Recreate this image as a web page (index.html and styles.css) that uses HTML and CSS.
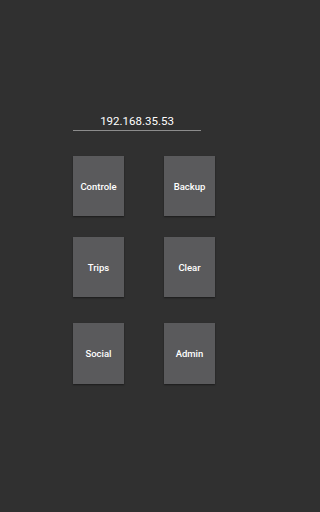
FILE: index.html
```html
<!DOCTYPE html>
<html>
<head>
<meta charset="utf-8">
<link rel="stylesheet" href="styles.css">
</head>
<body>
<div class="screen">
  <div class="ip-field">
    <div class="ip-text">192.168.35.53</div>
    <div class="ip-line"></div>
  </div>
  <div class="grid">
    <div class="row row1">
      <div class="btn">Controle</div>
      <div class="btn">Backup</div>
    </div>
    <div class="row row2">
      <div class="btn">Trips</div>
      <div class="btn">Clear</div>
    </div>
    <div class="row row3">
      <div class="btn">Social</div>
      <div class="btn">Admin</div>
    </div>
  </div>
</div>
</body>
</html>
```
FILE: styles.css
```css
html, body {
  margin: 0;
  padding: 0;
  background: #303030;
}
.screen {
  width: 288px;
  height: 512px;
  background: #303030;
  display: flex;
  flex-direction: column;
  font-family: Roboto, "Liberation Sans", sans-serif;
}
.ip-field {
  margin-top: 113px;
  margin-left: 73px;
  width: 128px;
  display: flex;
  flex-direction: column;
}
.ip-text {
  color: #ffffff;
  font-size: 11.5px;
  line-height: 16px;
  text-align: center;
}
.ip-line {
  margin-top: 1px;
  height: 1px;
  background: #8c8c8c;
}
.grid {
  display: flex;
  flex-direction: column;
  margin-top: 25px;
}
.row {
  display: flex;
  justify-content: center;
  gap: 40px;
}
.row2 { margin-top: 21px; }
.row3 { margin-top: 26px; }
.row3 .btn { height: 61px; }
.btn {
  width: 51px;
  height: 60px;
  background: #5a5a5c;
  box-shadow: 0 1px 1.5px rgba(0, 0, 0, 0.45);
  color: #ffffff;
  font-size: 9.5px;
  font-weight: 500;
  display: flex;
  align-items: center;
  justify-content: center;
}
```
